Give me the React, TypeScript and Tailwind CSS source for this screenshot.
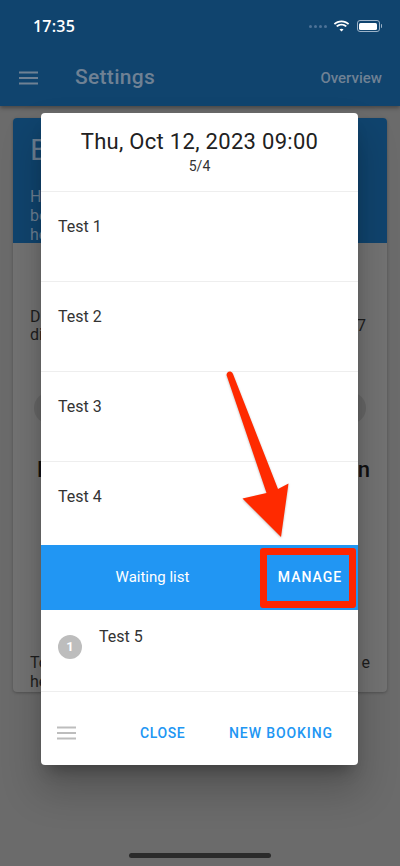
import React from "react";

function StatusIcons() {
  return (
    <div className="flex items-center gap-[5px]">
      <div className="flex gap-[2px] items-center mr-[1px]">
        <span className="w-[3px] h-[3px] rounded-full bg-[#4d7296]" />
        <span className="w-[3px] h-[3px] rounded-full bg-[#4d7296]" />
        <span className="w-[3px] h-[3px] rounded-full bg-[#4d7296]" />
        <span className="w-[3px] h-[3px] rounded-full bg-[#4d7296]" />
      </div>
      <svg width="17" height="12" viewBox="0 0 17 12">
        <path d="M8.5 2.2c2.5 0 4.8 1 6.5 2.6l1.2-1.3C14.2 1.6 11.5 0.4 8.5 0.4S2.8 1.6 0.8 3.5L2 4.8c1.7-1.6 4-2.6 6.5-2.6z" fill="#fff" />
        <path d="M8.5 5.5c1.6 0 3.1 0.6 4.2 1.6l1.2-1.3C12.4 4.5 10.5 3.7 8.5 3.7S4.6 4.5 3.1 5.8l1.2 1.3C5.4 6.1 6.9 5.5 8.5 5.5z" fill="#fff" />
        <path d="M8.5 8.7c0.8 0 1.5 0.3 2 0.8L8.5 11.6 6.5 9.5c0.5-0.5 1.2-0.8 2-0.8z" fill="#fff" />
      </svg>
      <div className="flex items-center ml-[2px]">
        <div className="w-[23px] h-[12px] rounded-[3px] border border-[#9db3c8] p-[1.5px]">
          <div className="w-full h-full rounded-[1.5px] bg-white" />
        </div>
        <div className="w-[1.5px] h-[4px] rounded-r bg-[#9db3c8] ml-[1px]" />
      </div>
    </div>
  );
}

function Menu({ color }: { color: string }) {
  return (
    <svg width="19" height="14" viewBox="0 0 19 14">
      <rect x="0" y="0.5" width="19" height="2" fill={color} />
      <rect x="0" y="6" width="19" height="2" fill={color} />
      <rect x="0" y="11.5" width="19" height="2" fill={color} />
    </svg>
  );
}

export default function App() {
  const rows = ["Test 1", "Test 2", "Test 3", "Test 4"];
  return (
    <div
      className="relative w-[400px] h-[866px] overflow-hidden bg-[#6b6b6b]"
      style={{ fontFamily: "Roboto, 'Noto Sans', sans-serif" }}
    >
      {/* Top bars */}
      <div className="bg-[#10446e] h-[106px] shadow-[0_2px_4px_rgba(0,0,0,0.35)] relative z-10">
        <div className="h-[50px] flex items-center justify-between pl-[33px] pr-[18px] pt-[2px]">
          <span
            className="text-white text-[16px] font-semibold tracking-[0.2px]"
            style={{ fontFamily: "'Open Sans', 'Liberation Sans', sans-serif" }}
          >
            17:35
          </span>
          <StatusIcons />
        </div>
        <div className="h-[56px] flex items-center pl-[19px] pr-[18px]">
          <Menu color="#6f8194" />
          <span className="ml-[37px] text-[21px] font-medium text-[#6f8194] tracking-[0.3px]">Settings</span>
          <span className="ml-auto text-[15px] font-medium text-[#6f8194]">Overview</span>
        </div>
      </div>

      {/* Background card */}
      <div className="mx-[13px] mt-[12px] h-[574px] rounded-[4px] bg-[#737373] shadow-[0_1px_3px_rgba(0,0,0,0.25)] overflow-hidden">
        <div className="bg-[#10446e] h-[125px] px-[17px] pt-[15px]">
          <div className="text-[30px] leading-[34px] text-[#6d7f92]">Booking</div>
          <div className="mt-[20px] text-[16px] leading-[19px] text-[#6d7f92] w-[320px]">
            <div>Here you can</div>
            <div>be notified</div>
            <div>here when</div>
          </div>
        </div>
        <div className="px-[17px] pt-[65px]">
          <div className="flex items-center justify-between text-[#1e1e1e] text-[16px] leading-[18px]">
            <div>
              <div>Days in advance</div>
              <div>displayed</div>
            </div>
            <span className="mr-[4px]">7</span>
          </div>
          <div className="mt-[48px] flex justify-between">
            <div className="w-[60px] h-[32px] rounded-full bg-[#676767] ml-[4px]" />
            <div className="w-[60px] h-[32px] rounded-full bg-[#676767] mr-[4px]" />
          </div>
          <div className="mt-[33px] flex justify-between text-[22px] font-medium text-[#111] leading-[26px]">
            <span className="ml-[7px]">Notifications</span>
            <span>n</span>
          </div>
          <div className="mt-[170px] text-[16px] leading-[19px] text-[#1e1e1e]">
            <div className="flex justify-between">
              <span>To be notified</span>
              <span>e</span>
            </div>
            <div>here</div>
          </div>
        </div>
      </div>

      {/* Home indicator */}
      <div className="absolute left-[129px] bottom-[8px] w-[142px] h-[5px] rounded-full bg-[#2b2b2b]" />

      {/* Dialog */}
      <div className="absolute left-[41px] top-[113px] w-[317px] h-[652px] bg-white rounded-[4px] shadow-[0_11px_15px_-7px_rgba(0,0,0,0.3),0_24px_38px_3px_rgba(0,0,0,0.2)] overflow-hidden flex flex-col z-20">
        <div className="h-[79px] border-b border-[#eeeeee] flex flex-col items-center pt-[15px]">
          <div className="text-[22px] leading-[28px] text-[#212121] tracking-[0.3px]">Thu, Oct 12, 2023 09:00</div>
          <div className="text-[14px] leading-[20px] text-[#333]">5/4</div>
        </div>
        {rows.map((r, i) => (
          <div
            key={r}
            className={`${i === 3 ? "h-[83px]" : "h-[90px] border-b border-[#eeeeee]"} pl-[17px] pt-[25px]`}
          >
            <div className="text-[16px] leading-[20px] text-[#333]">{r}</div>
          </div>
        ))}
        <div className="h-[65px] bg-[#2196f3] flex items-center">
          <div className="flex-1 text-center text-white text-[15px] pl-[4px]">Waiting list</div>
          <div className="w-[96px] h-[60px] mr-[2px] border-[7px] border-[#ff2600] rounded-[3px] flex items-center justify-center">
            <span className="text-white text-[14px] font-medium tracking-[1px] ml-[4px]">MANAGE</span>
          </div>
        </div>
        <div className="h-[82px] border-b border-[#eeeeee] flex pl-[17px]">
          <div className="mt-[25px] w-[24px] h-[24px] rounded-full bg-[#bdbdbd] flex items-center justify-center text-white text-[13px] font-bold">
            1
          </div>
          <div className="ml-[17px] mt-[17px] text-[16px] leading-[20px] text-[#333]">Test 5</div>
        </div>
        <div className="flex-1 flex items-center pl-[16px] pr-[25px] pt-[9px]">
          <Menu color="#bdbdbd" />
          <span className="ml-[64px] text-[14px] font-medium text-[#2196f3] tracking-[0.6px]">CLOSE</span>
          <span className="ml-auto text-[14px] font-medium text-[#2196f3] tracking-[0.9px]">NEW BOOKING</span>
        </div>
      </div>

      {/* Arrow */}
      <svg className="absolute inset-0 z-30 pointer-events-none" width="400" height="866" viewBox="0 0 400 866">
        <path
          d="M226.5 375 Q227 371 230.5 371.5 Q232.5 372 233 374 L278 489 L288.5 483.5 L281 537 L242.5 498.5 L266.5 493 Z"
          fill="#ff2a00"
          style={{ filter: "drop-shadow(0 1px 1px rgba(0,0,0,0.25))" }}
        />
      </svg>
    </div>
  );
}
